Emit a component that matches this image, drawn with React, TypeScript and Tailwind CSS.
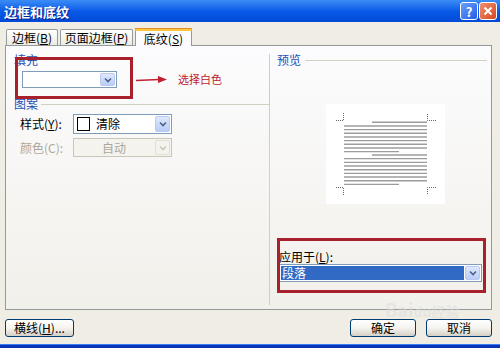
import React from "react";

const F = "font-['Noto_Sans_CJK_SC','Liberation_Sans',sans-serif]";

function Chevron({ color = "#4d6185" }: { color?: string }) {
  return (
    <svg width="8" height="6" viewBox="0 0 8 6">
      <path d="M1 1.5 L4 4.5 L7 1.5" fill="none" stroke={color} strokeWidth="1.6" />
    </svg>
  );
}

function ArrowBtn({ disabled = false }: { disabled?: boolean }) {
  return (
    <div
      className={
        disabled
          ? "w-[15px] self-stretch m-[1px] rounded-[2px] border border-[#e2e0d6] bg-[#f4f3ee] flex items-center justify-center"
          : "w-[15px] self-stretch m-[1px] rounded-[2px] border border-[#b9c9ef] bg-gradient-to-b from-[#dfe8fd] to-[#b8cdf8] flex items-center justify-center"
      }
    >
      <Chevron color={disabled ? "#c9c7ba" : "#4d6185"} />
    </div>
  );
}

function Preview() {
  const lines: React.ReactNode[] = [];
  [18.3, 51].forEach((start, p) => {
    for (let i = 0; i < 9; i++) {
      const y = start + i * 3.67;
      const x1 = i === 0 ? 46 : 18;
      const x2 = i === 8 ? 73 : 101;
      lines.push(<line key={p + "-" + i} x1={x1} x2={x2} y1={y} y2={y} stroke="#9c9c9c" strokeWidth="1.4" />);
    }
  });
  const d = { stroke: "#666", strokeWidth: 1, strokeDasharray: "1 1", fill: "none" };
  return (
    <svg width="119" height="100" viewBox="0 0 119 100" className="bg-white">
      {lines}
      <path d="M10 16.5 H17.5 V9" {...d} />
      <path d="M110 16.5 H101.5 V9" {...d} />
      <path d="M10 83.5 H17.5 V91" {...d} />
      <path d="M110 83.5 H101.5 V91" {...d} />
    </svg>
  );
}

function Tab({ children, selected = false, w }: { children: React.ReactNode; selected?: boolean; w: string }) {
  if (selected)
    return (
      <div className={`${w} h-[18px] -mb-px relative z-10 border-x border-[#919b9c] bg-[#fcfcfe] flex flex-col`}>
        <div className="h-[3px] bg-[#ffc83c] border-t border-[#e68b2c] -mx-px rounded-t-[2px]" />
        <div className="flex-1 flex items-center justify-center text-[12px] leading-none text-black">{children}</div>
      </div>
    );
  return (
    <div className={`${w} h-[16px] border border-b-0 border-[#919b9c] rounded-t-[2px] bg-gradient-to-b from-white to-[#ecebe6] flex items-center justify-center text-[12px] leading-none text-black`}>
      {children}
    </div>
  );
}

function Btn({ children, w }: { children: React.ReactNode; w: string }) {
  return (
    <div className={`${w} h-[18px] rounded-[3px] border border-[#003c74] bg-gradient-to-b from-white via-[#f5f4ef] to-[#d6d0c5] flex items-center justify-center text-[12px] leading-none text-black`}>
      {children}
    </div>
  );
}

export default function App() {
  return (
    <div className={`${F} relative w-[500px] h-[348px] flex flex-col overflow-hidden bg-[#ece9d8]`}>
      {/* Title bar */}
      <div className="h-[22px] bg-gradient-to-b from-[#3b8cf5] via-[#0a5ae8] to-[#0049d6] flex items-center pl-[4px] pr-[3px]">
        <span className="text-white font-bold text-[13px] leading-none [text-shadow:1px_1px_0_#0a1e8c]">边框和底纹</span>
        <div className="ml-auto flex gap-[1px]">
          <div className="w-[18px] h-[18px] rounded-[3px] border border-white bg-gradient-to-br from-[#6ea0f8] to-[#1f5ae6] flex items-center justify-center text-white font-bold text-[13px] leading-none">?</div>
          <div className="w-[18px] h-[18px] rounded-[3px] border border-white bg-gradient-to-br from-[#f0906c] to-[#d8451e] flex items-center justify-center">
            <svg width="10" height="10" viewBox="0 0 10 10">
              <path d="M1.5 1.5 L8.5 8.5 M8.5 1.5 L1.5 8.5" stroke="white" strokeWidth="2" />
            </svg>
          </div>
        </div>
      </div>

      {/* Body */}
      <div className="flex-1 flex flex-col bg-[#efede4] pt-[6px]">
        <div className="flex items-end gap-[2px] pl-[6px]">
          <Tab w="w-[52px]">边框(<u>B</u>)</Tab>
          <Tab w="w-[73px]">页面边框(<u>P</u>)</Tab>
          <Tab w="w-[57px]" selected>底纹(<u>S</u>)</Tab>
        </div>

        {/* Panel */}
        <div className="ml-[5px] w-[487px] h-[265px] border border-[#919b9c] bg-gradient-to-b from-[#fcfcfe] to-[#f2f0ea] flex">
          {/* Left column */}
          <div className="w-[263px] pt-[8px] flex flex-col">
            <div className="pl-[8px] text-[12px] leading-[12px] text-[#1c4fb8]">填充</div>
            <div className="mt-[5px] flex items-center">
              <div className="ml-[16px] w-[95px] h-[17px] border border-[#7f9db9] bg-white flex justify-end">
                <ArrowBtn />
              </div>
              <svg width="32" height="10" viewBox="0 0 32 10" className="ml-[19px]">
                <path d="M0 5.5 L23 4.5" stroke="#c02030" strokeWidth="1.3" />
                <path d="M22 1 L31 4.5 L22 8 Z" fill="#c02030" />
              </svg>
              <span className="ml-[10px] text-[11px] leading-none text-[#c0202c]">选择白色</span>
            </div>
            <div className="mt-[10px] flex items-center pl-[8px]">
              <span className="text-[12px] leading-[12px] text-[#1c4fb8]">图案</span>
              <div className="ml-[3px] flex-1 h-px bg-[#d0d0bf]" />
            </div>
            <div className="mt-[4px] flex items-center pl-[14px]">
              <span className="w-[53px] text-[12px] leading-none text-black">样式(<u>Y</u>):</span>
              <div className="w-[99px] h-[20px] border border-[#7f9db9] bg-white flex items-center">
                <div className="ml-[3px] w-[13px] h-[14px] border border-black bg-white" />
                <span className="ml-[6px] text-[12px] leading-none text-black">清除</span>
                <div className="ml-auto self-stretch flex">
                  <ArrowBtn />
                </div>
              </div>
            </div>
            <div className="mt-[4px] flex items-center pl-[14px]">
              <span className="w-[53px] text-[12px] leading-none text-[#aca899]">颜色(C):</span>
              <div className="w-[99px] h-[19px] border border-[#c9c7ba] bg-[#f4f3ee] flex items-center">
                <span className="flex-1 text-center text-[12px] leading-none text-[#aca899]">自动</span>
                <div className="self-stretch flex">
                  <ArrowBtn disabled />
                </div>
              </div>
            </div>
          </div>

          {/* Separator */}
          <div className="w-px mt-[8px] mb-[4px] bg-[#d0d0bf]" />

          {/* Right column */}
          <div className="flex-1 pt-[8px] flex flex-col">
            <div className="flex items-center pl-[7px] pr-[4px]">
              <span className="text-[12px] leading-[12px] text-[#1c4fb8]">预览</span>
              <div className="ml-[4px] flex-1 h-px bg-[#d0d0bf]" />
            </div>
            <div className="mt-[38px] ml-[56px]">
              <Preview />
            </div>
            <div className="mt-[47px] pl-[9px] text-[12px] leading-[12px] text-black">应用于(<u>L</u>):</div>
            <div className="mt-[1px] ml-[9px] w-[203px] h-[18px] border border-[#7f9db9] bg-white flex items-center">
              <div className="ml-[1px] flex-1 h-[14px] bg-[#316ac5] flex items-center pl-[1px]">
                <span className="text-[12px] leading-none text-white">段落</span>
              </div>
              <div className="self-stretch flex">
                <ArrowBtn />
              </div>
            </div>
          </div>
        </div>

        {/* Bottom buttons */}
        <div className="mt-[9px] flex items-center pl-[5px] pr-[8px]">
          <Btn w="w-[69px]">横线(<u>H</u>)...</Btn>
          <div className="ml-auto flex gap-[10px]">
            <Btn w="w-[66px]">确定</Btn>
            <Btn w="w-[66px]">取消</Btn>
          </div>
        </div>
      </div>

      {/* Bottom frame */}
      <div className="h-[4px] bg-[#0834b8] border-t border-[#3d7bf0]" />

      {/* Red annotation boxes */}
      <div className="absolute left-[15px] top-[57px] w-[118px] h-[42px] border-[3px] border-[#a8202c] pointer-events-none" />
      <div className="absolute left-[277px] top-[238px] w-[209px] h-[55px] border-[3px] border-[#a8202c] pointer-events-none" />

      {/* Watermark */}
      <div className="absolute left-[385px] top-[300px] text-[18px] leading-none font-bold text-[#dcdcdc]/50 pointer-events-none">Bai<span className="text-[14px]">du经验</span></div>
    </div>
  );
}
